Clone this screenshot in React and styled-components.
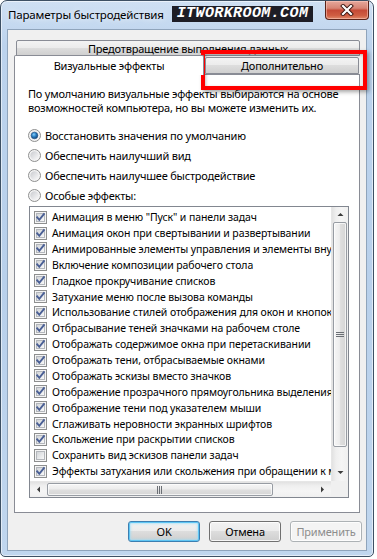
import React from 'react';
import styled, { createGlobalStyle } from 'styled-components';

const Global = createGlobalStyle`
  html, body { margin: 0; padding: 0; background: #ffffff; }
  body { font-family: "Noto Sans", sans-serif; font-size: 11px; letter-spacing: -0.2px; color: #000; }
  * { box-sizing: border-box; }
`;

const Window = styled.div`
  position: relative;
  width: 374px;
  height: 557px;
  border: 1px solid #3d5064;
  border-radius: 7px 7px 5px 5px;
  background: linear-gradient(180deg, #cfe0f3 0%, #bcd3ed 8%, #b8d0eb 50%, #c0d6ee 100%);
  box-shadow: inset 0 0 0 1px rgba(255, 255, 255, 0.55);
  padding: 0 6px 5px;
  display: flex;
  flex-direction: column;
`;

const TitleBar = styled.div`
  height: 28px;
  margin: 0 -6px 0 -6px;
  padding: 0 4px 0 7px;
  display: flex;
  align-items: flex-start;
`;

const TitleText = styled.div`
  line-height: 27px;
  font-size: 11.5px;
  letter-spacing: -0.15px;
  color: #000;
  text-shadow: 0 0 6px rgba(255, 255, 255, 0.9);
`;

const CloseButton = styled.div`
  margin-left: auto;
  width: 44px;
  height: 19px;
  border: 1px solid #5a2218;
  border-top: none;
  border-radius: 0 0 4px 4px;
  background: linear-gradient(180deg, #e6a89c 0%, #d78474 40%, #c54a36 52%, #cf5d42 80%, #e08a6a 100%);
  box-shadow: inset 0 0 0 1px rgba(255, 210, 200, 0.5);
  display: flex;
  align-items: center;
  justify-content: center;
`;

const Watermark = styled.div`
  position: absolute;
  left: 171px;
  top: 5px;
  width: 141px;
  height: 16px;
  background: #1d1d26;
  color: #ffffff;
  font-family: "Liberation Mono", monospace;
  font-weight: bold;
  font-style: italic;
  font-size: 15px;
  line-height: 16px;
  letter-spacing: 0.4px;
  display: flex;
  align-items: center;
  justify-content: center;
`;

const Highlight = styled.div`
  position: absolute;
  left: 200px;
  top: 49px;
  width: 166px;
  height: 40px;
  border: 4px solid #ff0000;
  box-shadow: 2px 2px 4px rgba(0, 0, 0, 0.35), inset 1px 1px 3px rgba(0, 0, 0, 0.25);
  pointer-events: none;
`;

const Client = styled.div`
  flex: 1;
  background: #f0f0f0;
  border: 1px solid #8fa4bb;
  display: flex;
  flex-direction: column;
`;

const TabControl = styled.div`
  margin: 10px 0 0 6px;
  width: 346px;
  display: flex;
  flex-direction: column;
`;

const BackRow = styled.div`
  display: flex;
  padding-left: 2px;
  height: 16px;
`;

const FrontRow = styled.div`
  display: flex;
  align-items: flex-end;
  height: 18px;
  position: relative;
  z-index: 1;
`;

const Tab = styled.div`
  width: ${(p) => p.$w}px;
  height: ${(p) => (p.$active ? 20 : p.$h || 17)}px;
  margin-bottom: ${(p) => (p.$active ? -1 : 0)}px;
  margin-left: ${(p) => p.$ml || 0}px;
  border: 1px solid #898c95;
  border-bottom: ${(p) => (p.$active ? 'none' : '1px solid #898c95')};
  border-radius: 2px 2px 0 0;
  background: ${(p) =>
    p.$active
      ? '#ffffff'
      : 'linear-gradient(180deg, #f3f3f3 0%, #ebebeb 50%, #dddddd 50%, #d0d0d0 100%)'};
  display: flex;
  justify-content: center;
  align-items: center;
  padding-top: ${(p) => (p.$active ? 0 : 1)}px;
  font-size: 11px;
  line-height: 14px;
  white-space: nowrap;
  overflow: hidden;
`;

const Panel = styled.div`
  height: 439px;
  background: #ffffff;
  border: 1px solid #898c95;
  padding: 12px 0 0 13px;
  display: flex;
  flex-direction: column;
`;

const Description = styled.div`
  line-height: 14px;
  white-space: nowrap;
`;

const RadioGroup = styled.div`
  margin-top: 11px;
  display: flex;
  flex-direction: column;
`;

const RadioRow = styled.div`
  height: 19.8px;
  display: flex;
  align-items: center;
  gap: 4px;
  white-space: nowrap;
`;

const ListBox = styled.div`
  margin: 1px 0 0 1px;
  width: 320px;
  height: 292px;
  border: 1px solid #828790;
  background: #ffffff;
  display: grid;
  grid-template-columns: 301px 17px;
  grid-template-rows: 274px 16px;
`;

const ListItems = styled.div`
  overflow: hidden;
  padding: 2px 0 0 4px;
  font-size: 10.5px;
  letter-spacing: -0.1px;
`;

const ListRow = styled.div`
  height: 15.875px;
  display: flex;
  align-items: center;
  gap: 5px;
  white-space: nowrap;
`;

const VScroll = styled.div`
  display: flex;
  flex-direction: column;
  background: linear-gradient(90deg, #e2e2e2 0%, #efefef 25%, #f5f5f5 60%, #f0f0f0 100%);
  border-left: 1px solid #e6e6e6;
`;

const HScroll = styled.div`
  display: flex;
  background: linear-gradient(180deg, #e2e2e2 0%, #efefef 25%, #f5f5f5 60%, #f0f0f0 100%);
  border-top: 1px solid #e6e6e6;
`;

const ArrowBox = styled.div`
  width: ${(p) => p.$w}px;
  height: ${(p) => p.$h}px;
  flex: none;
  display: flex;
  align-items: center;
  justify-content: center;
`;

const Spacer = styled.div`
  flex: 1;
`;

const VThumb = styled.div`
  height: 225px;
  margin: 0 1px;
  border: 1px solid #979ca3;
  border-radius: 2px;
  background: linear-gradient(90deg, #f6f6f6 0%, #ededed 45%, #dedede 55%, #d6d6d6 100%);
  box-shadow: inset 0 0 0 1px rgba(255, 255, 255, 0.7);
  display: flex;
  align-items: center;
  justify-content: center;
`;

const HThumb = styled.div`
  width: 226px;
  margin: 1px 0;
  border: 1px solid #979ca3;
  border-radius: 2px;
  background: linear-gradient(180deg, #f6f6f6 0%, #ededed 45%, #dedede 55%, #d6d6d6 100%);
  box-shadow: inset 0 0 0 1px rgba(255, 255, 255, 0.7);
  display: flex;
  align-items: center;
  justify-content: center;
`;

const Corner = styled.div`
  background: #f0f0f0;
`;

const ButtonRow = styled.div`
  margin: 8px 4px 0 0;
  display: flex;
  justify-content: flex-end;
  gap: 9px;
`;

const Button = styled.div`
  width: 72px;
  height: 21px;
  border-radius: 3px;
  border: 1px solid ${(p) => (p.$default ? '#3c7fb1' : p.$disabled ? '#adb2b5' : '#707070')};
  background: ${(p) =>
    p.$disabled
      ? '#f4f4f4'
      : 'linear-gradient(180deg, #f2f2f2 0%, #ebebeb 50%, #dddddd 50%, #cfcfcf 100%)'};
  box-shadow: ${(p) =>
    p.$default
      ? 'inset 0 0 0 1px #5fc6f4, inset 0 0 2px 2px rgba(150, 220, 250, 0.6)'
      : 'inset 0 0 0 1px rgba(255,255,255,0.8)'};
  color: ${(p) => (p.$disabled ? '#8d8d8d' : '#000')};
  display: flex;
  align-items: center;
  justify-content: center;
  font-size: 11px;
`;

const CheckBox = ({ checked }) => (
  <svg width="13" height="13" viewBox="0 0 13 13" style={{ flex: 'none' }}>
    <defs>
      <linearGradient id="cbg" x1="0" y1="0" x2="1" y2="1">
        <stop offset="0" stopColor="#cfd2d6" />
        <stop offset="1" stopColor="#fbfbfb" />
      </linearGradient>
    </defs>
    <rect x="0.5" y="0.5" width="12" height="12" fill="#f5f5f5" stroke="#8e8f8f" />
    <rect x="2.5" y="2.5" width="8" height="8" fill="url(#cbg)" stroke="#b4b7bc" strokeWidth="1" />
    {checked && (
      <path d="M3.2 6.3 L5.3 8.8 L9.9 3.2" fill="none" stroke="#4a5f95" strokeWidth="1.9" strokeLinecap="square" />
    )}
  </svg>
);

const Radio = ({ checked }) => (
  <svg width="13" height="13" viewBox="0 0 13 13" style={{ flex: 'none' }}>
    <defs>
      <linearGradient id="rbg" x1="0" y1="0" x2="1" y2="1">
        <stop offset="0" stopColor="#c9cbcf" />
        <stop offset="1" stopColor="#fafafa" />
      </linearGradient>
      <radialGradient id="rdot" cx="0.4" cy="0.35" r="0.7">
        <stop offset="0" stopColor="#8ad0fb" />
        <stop offset="0.45" stopColor="#2d84c8" />
        <stop offset="1" stopColor="#113d6e" />
      </radialGradient>
    </defs>
    <circle cx="6.5" cy="6.5" r="6" fill="#f3f3f3" stroke="#8e8f8f" />
    <circle cx="6.5" cy="6.5" r="4.2" fill="url(#rbg)" />
    {checked && <circle cx="6.5" cy="6.5" r="3.3" fill="url(#rdot)" stroke="#1b4f85" strokeWidth="0.6" />}
  </svg>
);

const Arrow = ({ dir }) => {
  const paths = {
    up: 'M0.5 4 L3.5 1 L6.5 4 Z',
    down: 'M0.5 1 L3.5 4 L6.5 1 Z',
  };
  const hpaths = {
    left: 'M4 0.5 L1 3.5 L4 6.5 Z',
    right: 'M1 0.5 L4 3.5 L1 6.5 Z',
  };
  if (paths[dir]) {
    return (
      <svg width="7" height="5" viewBox="0 0 7 5">
        <path d={paths[dir]} fill="#3c3c3c" />
      </svg>
    );
  }
  return (
    <svg width="5" height="7" viewBox="0 0 5 7">
      <path d={hpaths[dir]} fill="#3c3c3c" />
    </svg>
  );
};

const Gripper = ({ vertical }) =>
  vertical ? (
    <svg width="8" height="6" viewBox="0 0 8 6">
      {[0.5, 2.5, 4.5].map((y) => (
        <line key={y} x1="0" x2="8" y1={y} y2={y} stroke="#6b6f75" strokeWidth="1" />
      ))}
    </svg>
  ) : (
    <svg width="6" height="8" viewBox="0 0 6 8">
      {[0.5, 2.5, 4.5].map((x) => (
        <line key={x} y1="0" y2="8" x1={x} x2={x} stroke="#6b6f75" strokeWidth="1" />
      ))}
    </svg>
  );

const CloseGlyph = () => (
  <svg width="14" height="12" viewBox="0 0 14 12">
    <path d="M3 2 L11 10 M11 2 L3 10" stroke="#3a1510" strokeWidth="4" strokeLinecap="square" />
    <path d="M3 2 L11 10 M11 2 L3 10" stroke="#ffffff" strokeWidth="2.2" strokeLinecap="square" />
  </svg>
);

const radios = [
  ['Восстановить значения по умолчанию', true],
  ['Обеспечить наилучший вид', false],
  ['Обеспечить наилучшее быстродействие', false],
  ['Особые эффекты:', false],
];

const items = [
  ['Анимация в меню "Пуск" и панели задач', true],
  ['Анимация окон при свертывании и развертывании', true],
  ['Анимированные элементы управления и элементы внутри окна', true],
  ['Включение композиции рабочего стола', true],
  ['Гладкое прокручивание списков', true],
  ['Затухание меню после вызова команды', true],
  ['Использование стилей отображения для окон и кнопок', true],
  ['Отбрасывание теней значками на рабочем столе', true],
  ['Отображать содержимое окна при перетаскивании', true],
  ['Отображать тени, отбрасываемые окнами', true],
  ['Отображать эскизы вместо значков', true],
  ['Отображение прозрачного прямоугольника выделения', true],
  ['Отображение тени под указателем мыши', true],
  ['Сглаживать неровности экранных шрифтов', true],
  ['Скольжение при раскрытии списков', true],
  ['Сохранить вид эскизов панели задач', false],
  ['Эффекты затухания или скольжения при обращении к меню', true],
  ['Эффекты затухания или скольжения при обращении к подсказке', true],
];

export default function App() {
  return (
    <>
      <Global />
      <Window>
        <TitleBar>
          <TitleText>Параметры быстродействия</TitleText>
          <CloseButton>
            <CloseGlyph />
          </CloseButton>
        </TitleBar>
        <Client>
          <TabControl>
            <BackRow>
              <Tab $w={344} $h={16}>Предотвращение выполнения данных</Tab>
            </BackRow>
            <FrontRow>
              <Tab $w={190} $active>Визуальные эффекты</Tab>
              <Tab $w={154} $ml={1}>Дополнительно</Tab>
            </FrontRow>
            <Panel>
              <Description>
                По умолчанию визуальные эффекты выбираются на основе
                <br />
                возможностей компьютера, но вы можете изменить их.
              </Description>
              <RadioGroup>
                {radios.map(([label, on]) => (
                  <RadioRow key={label}>
                    <Radio checked={on} />
                    <span>{label}</span>
                  </RadioRow>
                ))}
              </RadioGroup>
              <ListBox>
                <ListItems>
                  {items.map(([label, on]) => (
                    <ListRow key={label}>
                      <CheckBox checked={on} />
                      <span>{label}</span>
                    </ListRow>
                  ))}
                </ListItems>
                <VScroll>
                  <ArrowBox $w={16} $h={15}>
                    <Arrow dir="up" />
                  </ArrowBox>
                  <VThumb>
                    <Gripper vertical />
                  </VThumb>
                  <Spacer />
                  <ArrowBox $w={16} $h={17}>
                    <Arrow dir="down" />
                  </ArrowBox>
                </VScroll>
                <HScroll>
                  <ArrowBox $w={17} $h={15}>
                    <Arrow dir="left" />
                  </ArrowBox>
                  <HThumb>
                    <Gripper />
                  </HThumb>
                  <Spacer />
                  <ArrowBox $w={18} $h={15}>
                    <Arrow dir="right" />
                  </ArrowBox>
                </HScroll>
                <Corner />
              </ListBox>
            </Panel>
          </TabControl>
          <ButtonRow>
            <Button $default>OK</Button>
            <Button>Отмена</Button>
            <Button $disabled>Применить</Button>
          </ButtonRow>
        </Client>
        <Watermark>ITWORKROOM.COM</Watermark>
        <Highlight />
      </Window>
    </>
  );
}
